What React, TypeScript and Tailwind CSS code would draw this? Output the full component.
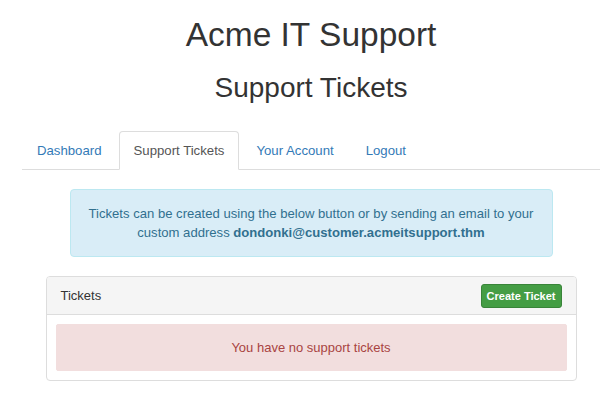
const tabs = [
  { label: 'Dashboard', active: false },
  { label: 'Support Tickets', active: true },
  { label: 'Your Account', active: false },
  { label: 'Logout', active: false },
];

export default function App() {
  return (
    <div
      className="min-h-screen bg-white text-[#333] pl-[22px] pr-[10px]"
      style={{ fontFamily: '"Liberation Sans", Arial, Helvetica, sans-serif' }}
    >
      <h1 className="mt-[16px] text-center text-[33.5px] leading-[37px] font-normal">Acme IT Support</h1>
      <h2 className="mt-[19px] text-center text-[28px] leading-[31px] font-normal">Support Tickets</h2>

      <ul className="mt-[28px] flex border-b border-[#ddd] text-[13.2px] leading-[19px]">
        {tabs.map((tab) => (
          <li key={tab.label} className="-mb-px mr-[2px]">
            <a
              href="#"
              className={
                tab.active
                  ? 'block rounded-t-[4px] border border-[#ddd] border-b-transparent bg-white px-[14px] py-[9px] text-[#555]'
                  : 'block rounded-t-[4px] border border-transparent px-[14px] py-[9px] text-[#337ab7]'
              }
            >
              {tab.label}
            </a>
          </li>
        ))}
      </ul>

      <div className="mx-auto mt-[19px] w-[483px] rounded-[4px] border border-[#bce8f1] bg-[#d9edf7] px-[14px] py-[14px] text-center text-[13.1px] leading-[19px] text-[#31708f]">
        Tickets can be created using the below button or by sending an email to your
        <br />
        custom address <strong className="font-bold">dondonki@customer.acmeitsupport.thm</strong>
      </div>

      <div className="mx-auto mt-[19px] w-[531px] rounded-[4px] border border-[#ddd] bg-white">
        <div className="flex items-center justify-between rounded-t-[3px] border-b border-[#ddd] bg-[#f5f5f5] px-[14px] pt-[7px] pb-[6px] text-[13px]">
          <span>Tickets</span>
          <button className="rounded-[3px] border border-[#398439] bg-[#449d44] px-[5px] py-[3px] text-[11px] font-bold leading-[16px] text-white">
            Create Ticket
          </button>
        </div>
        <div className="p-[9px]">
          <div className="rounded-[2px] border border-[#f2dede] bg-[#f2dede] py-[13px] text-center text-[13px] leading-[19px] text-[#a94442]">
            You have no support tickets
          </div>
        </div>
      </div>
    </div>
  );
}
